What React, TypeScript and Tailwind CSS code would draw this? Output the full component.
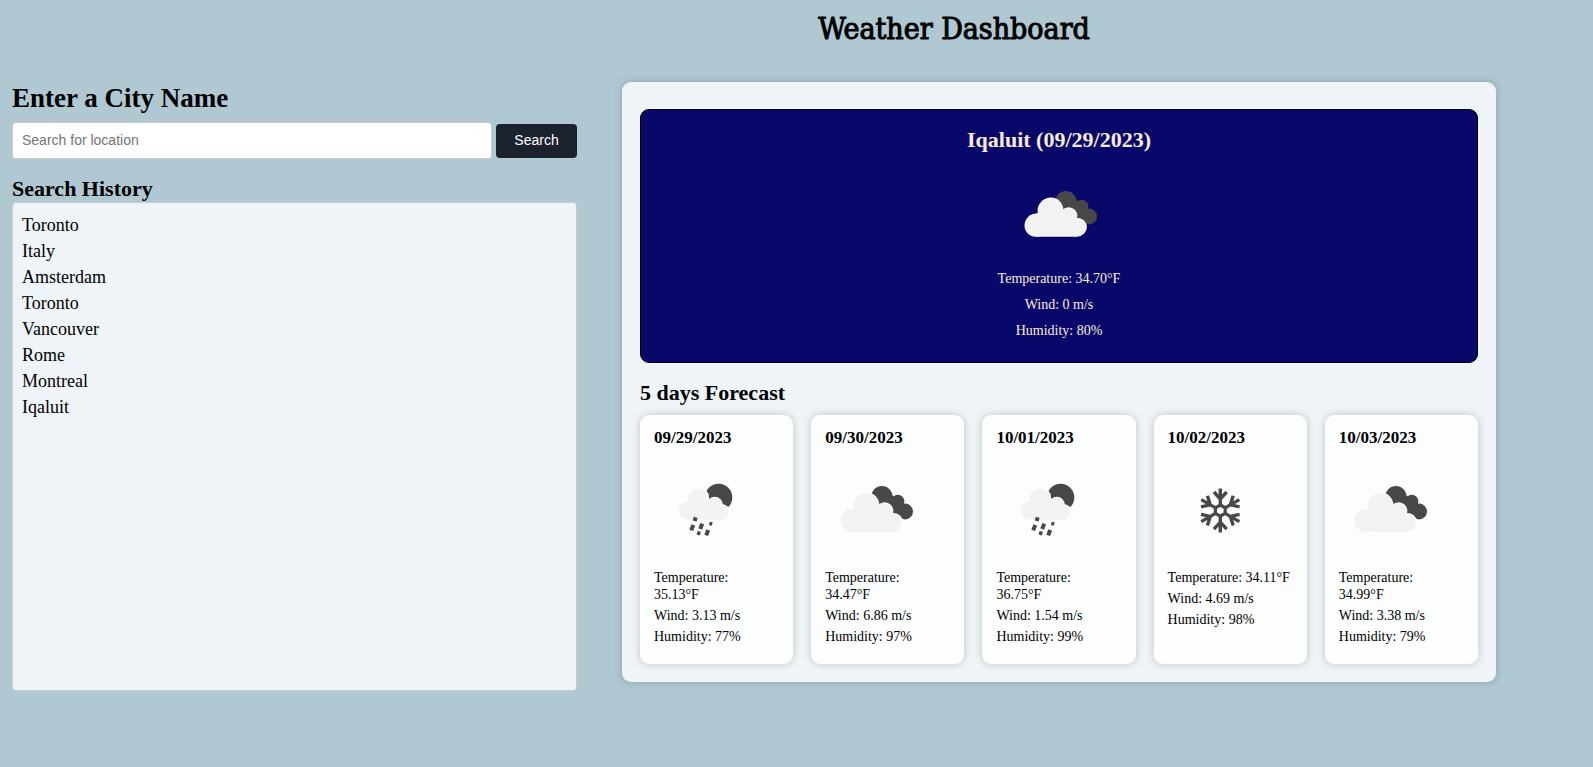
import React from "react";

type IconName = "clouds" | "rain" | "snow";

const history = ["Toronto", "Italy", "Amsterdam", "Toronto", "Vancouver", "Rome", "Montreal", "Iqaluit"];

const forecast: { date: string; icon: IconName; temp: string; wind: string; humidity: string; oneLine?: boolean }[] = [
  { date: "09/29/2023", icon: "rain", temp: "35.13", wind: "3.13", humidity: "77" },
  { date: "09/30/2023", icon: "clouds", temp: "34.47", wind: "6.86", humidity: "97" },
  { date: "10/01/2023", icon: "rain", temp: "36.75", wind: "1.54", humidity: "99" },
  { date: "10/02/2023", icon: "snow", temp: "34.11", wind: "4.69", humidity: "98", oneLine: true },
  { date: "10/03/2023", icon: "clouds", temp: "34.99", wind: "3.38", humidity: "79" },
];

function CloudShape() {
  return (
    <>
      <circle cx="26.8" cy="61.4" r="11.3" />
      <circle cx="41" cy="46.6" r="12.4" />
      <circle cx="58.8" cy="52.6" r="8.6" />
      <circle cx="68" cy="63.7" r="9" />
      <path d="M26.8 50L50 46L66 55L68 72.7H26.8z" />
    </>
  );
}

function RainCloudShape() {
  return (
    <>
      <circle cx="34" cy="51.2" r="9.2" />
      <circle cx="43.6" cy="39.6" r="10.2" />
      <circle cx="59.6" cy="47" r="8" />
      <circle cx="67" cy="53.5" r="7" />
      <path d="M34 43L50 38L64 48L67 60.5H34z" />
    </>
  );
}

function Clouds() {
  return (
    <>
      <g fill="#484848">
        <circle cx="56.9" cy="37.7" r="10.7" />
        <circle cx="72.8" cy="42.3" r="6.6" />
        <circle cx="80.1" cy="52.5" r="7.9" />
        <path d="M56 34L73 38L80 50L74 60L54 46z" />
      </g>
      <g fill="#fff" transform="translate(0.9 -0.7)">
        <CloudShape />
      </g>
      <g fill="#f2f2f2">
        <CloudShape />
      </g>
    </>
  );
}

function Rain() {
  return (
    <>
      <circle cx="64.6" cy="38.4" r="13.7" fill="#484848" />
      <g fill="#fcfefe" transform="translate(1.2 -1.2)">
        <RainCloudShape />
      </g>
      <g fill="#f2f2f2">
        <RainCloudShape />
      </g>
      <g stroke="#484848" strokeWidth="4">
        <path d="M41.7 58.4L40.6 62" />
        <path d="M39.3 66L37.2 71.4" />
        <path d="M48.2 64.6L46.2 70" />
        <path d="M45.2 72.4L44.2 76" strokeWidth="3.4" />
        <path d="M54.2 71L52.2 76.4" />
        <path d="M57.2 63L56.4 66.4" strokeWidth="3" />
      </g>
    </>
  );
}

function Snow() {
  return (
    <g transform="translate(52.3 51.6)" stroke="#484848" strokeWidth="3.4" fill="none">
      {[0, 60, 120, 180, 240, 300].map((angle) => (
        <path key={angle} transform={`rotate(${angle})`} d="M0 -5V-22M-6.4 -18.6L0 -11.6L6.4 -18.6" />
      ))}
      <path d="M0 -5.6L4.9 -2.8V2.8L0 5.6L-4.9 2.8V-2.8z" strokeWidth="3.2" />
    </g>
  );
}

function WeatherIcon({ name }: { name: IconName }) {
  return (
    <svg viewBox="0 0 100 100" className="block size-[100px]" role="img" aria-label={name}>
      {name === "clouds" ? <Clouds /> : name === "rain" ? <Rain /> : <Snow />}
    </svg>
  );
}

export default function App() {
  return (
    <div className="min-h-screen bg-[#afc8d2] font-['Liberation_Serif',serif] text-black">
      <header className="pt-2 pl-[315px] text-center">
        <h1 className="font-['DejaVu_Serif_Condensed','DejaVu_Serif',serif] text-[30px] leading-[42px] [-webkit-text-stroke:1px_black]">
          Weather Dashboard
        </h1>
      </header>

      <main className="grid grid-cols-[565fr_874fr] items-start gap-[45px] pt-8 pr-[97px] pb-10 pl-3">
        <section>
          <form onSubmit={(e) => e.preventDefault()}>
            <label htmlFor="city" className="block text-[27px] leading-8 font-bold">
              Enter a City Name
            </label>
            <div className="mt-2 flex items-center gap-1">
              <input
                id="city"
                type="text"
                placeholder="Search for location"
                className="h-[37px] min-w-0 flex-1 rounded border border-[#ccc] bg-white px-[9px] pb-0.5 font-['Liberation_Sans',sans-serif] text-[14px] placeholder:text-[#757575]"
              />
              <button
                type="submit"
                className="h-[34px] w-[81px] rounded bg-[#1c2130] font-['Liberation_Sans',sans-serif] text-[14px] text-white"
              >
                Search
              </button>
            </div>
          </form>
          <h2 className="mt-[17px] text-[22px] leading-[26px] font-bold">Search History</h2>
          <ul className="min-h-[489px] rounded border border-[#ccc] bg-[#eef4f7] px-[9px] py-[9px] text-[18px] leading-[22px]">
            {history.map((city, i) => (
              <li key={i} className="py-0.5">
                {city}
              </li>
            ))}
          </ul>
        </section>

        <section className="rounded-[9px] bg-[#eef4f7] px-[18px] pt-[27px] pb-[18px] shadow-[0_0_9px_rgba(0,0,0,0.2)]">
          <article className="flex flex-col items-center rounded-[9px] border border-black bg-[#08086a] pt-[17px] pb-[18px] text-[#faebd7]">
            <h2 className="text-[22px] leading-[26px] font-bold">Iqaluit (09/29/2023)</h2>
            <div className="mt-[11px]">
              <WeatherIcon name="clouds" />
            </div>
            <div className="mt-0.5 text-[14px] leading-[26px]">
              <p className="text-center">Temperature: 34.70°F</p>
              <p className="text-center">Wind: 0 m/s</p>
              <p className="text-center">Humidity: 80%</p>
            </div>
          </article>

          <h2 className="mt-[17px] text-[22px] leading-[26px] font-bold">5 days Forecast</h2>
          <div className="mt-[9px] grid grid-cols-5 gap-[18px]">
            {forecast.map((day) => (
              <article
                key={day.date}
                className="rounded-[9px] bg-[#fcfefe] px-[14px] pt-[13px] pb-[19px] shadow-[0_0_9px_rgba(0,0,0,0.2)]"
              >
                <h3 className="text-[17px] leading-5 font-bold">{day.date}</h3>
                <div className="mt-[11px]">
                  <WeatherIcon name={day.icon} />
                </div>
                <div className="mt-[10px] flex flex-col gap-1 pr-2 text-[14px] leading-[17px]">
                  <p className={day.oneLine ? "whitespace-nowrap" : ""}>Temperature: {day.temp}°F</p>
                  <p>Wind: {day.wind} m/s</p>
                  <p>Humidity: {day.humidity}%</p>
                </div>
              </article>
            ))}
          </div>
        </section>
      </main>
    </div>
  );
}
